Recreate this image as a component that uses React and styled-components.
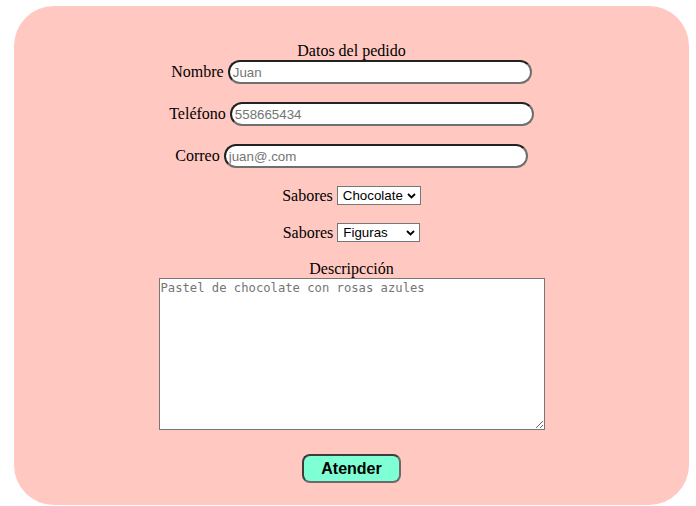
import React from "react";
import styled, { createGlobalStyle } from "styled-components";

const GlobalStyle = createGlobalStyle`
  html, body {
    margin: 0;
    padding: 0;
    background: #ffffff;
  }
  body {
    font-family: "Liberation Serif", "Times New Roman", serif;
    font-size: 16px;
    color: #000;
  }
`;

const Page = styled.div`
  padding: 6px 7px 1px 14px;
`;

const Card = styled.form`
  box-sizing: border-box;
  width: 675px;
  height: 499px;
  background: #ffc8c0;
  border-radius: 40px;
  padding-top: 36px;
  display: flex;
  flex-direction: column;
  align-items: center;
`;

const Heading = styled.div`
  font-family: "Liberation Serif", "Times New Roman", serif;
  font-size: 16px;
  line-height: 18px;
  height: 18px;
  margin-top: ${(p) => p.$mt || 0}px;
`;

const Row = styled.div`
  display: flex;
  align-items: center;
  gap: 4px;
  margin-top: ${(p) => p.$mt || 0}px;
`;

const Label = styled.label`
  font-family: "Liberation Serif", "Times New Roman", serif;
  font-size: 16px;
  line-height: 18px;
`;

const TextInput = styled.input`
  box-sizing: border-box;
  width: 304px;
  height: 24px;
  padding: 1px 3px;
  border-width: 2px;
  border-style: solid;
  border-color: #222 #6f6f6f #6f6f6f #222;
  border-radius: 12px;
  background: #fff;
  font-family: "Liberation Sans", Arial, sans-serif;
  font-size: 13.33px;
  color: #000;
  outline: none;
  &::placeholder {
    color: #757575;
  }
`;

const SelectWrap = styled.span`
  position: relative;
  display: inline-flex;
`;

const Select = styled.select`
  box-sizing: border-box;
  appearance: none;
  -webkit-appearance: none;
  width: ${(p) => p.$w}px;
  height: 19px;
  margin: 0;
  padding: 0 16px 0 5px;
  border: 1px solid #767676;
  border-radius: 0;
  background: #fff;
  font-family: "Liberation Sans", Arial, sans-serif;
  font-size: 13.33px;
  color: #000;
  outline: none;
`;

const Chevron = styled.svg`
  position: absolute;
  right: 5px;
  top: 7px;
  pointer-events: none;
`;

const TextArea = styled.textarea`
  box-sizing: border-box;
  display: block;
  width: 386px;
  height: 152px;
  margin: 0;
  padding: 2px 1px;
  border: 1px solid #767676;
  border-radius: 0;
  background: #fff;
  font-family: "DejaVu Sans Mono", "Liberation Mono", monospace;
  font-size: 12.2px;
  line-height: 15px;
  outline: none;
  &::placeholder {
    color: #757575;
  }
`;

const Button = styled.button`
  box-sizing: border-box;
  width: 99px;
  height: 29px;
  margin-top: 24px;
  border: 2px solid #4a4a4a;
  border-color: #3c3c3c #6a6a6a #6a6a6a #3c3c3c;
  border-radius: 8px;
  background: #7fffd4;
  font-family: "Liberation Sans", Arial, sans-serif;
  font-weight: bold;
  font-size: 16px;
  color: #000;
  padding: 0;
  cursor: pointer;
`;

function Dropdown({ id, width, options }) {
  return (
    <SelectWrap>
      <Select id={id} $w={width} defaultValue={options[0]}>
        {options.map((o) => (
          <option key={o} value={o}>
            {o}
          </option>
        ))}
      </Select>
      <Chevron width="9" height="6" viewBox="0 0 9 6">
        <path d="M1 1 L4.5 4.5 L8 1" fill="none" stroke="#000" strokeWidth="1.8" />
      </Chevron>
    </SelectWrap>
  );
}

export default function App() {
  return (
    <>
      <GlobalStyle />
      <Page>
        <Card onSubmit={(e) => e.preventDefault()}>
          <Heading>Datos del pedido</Heading>
          <Row>
            <Label htmlFor="nombre">Nombre</Label>
            <TextInput id="nombre" type="text" placeholder="Juan" />
          </Row>
          <Row $mt={18}>
            <Label htmlFor="telefono">Teléfono</Label>
            <TextInput id="telefono" type="tel" placeholder="558665434" />
          </Row>
          <Row $mt={18}>
            <Label htmlFor="correo">Correo</Label>
            <TextInput id="correo" type="email" placeholder="juan@.com" />
          </Row>
          <Row $mt={18}>
            <Label htmlFor="sabor">Sabores</Label>
            <Dropdown id="sabor" width={84} options={["Chocolate", "Vainilla", "Fresa"]} />
          </Row>
          <Row $mt={18}>
            <Label htmlFor="forma">Sabores</Label>
            <Dropdown id="forma" width={83} options={["Figuras", "Flores", "Letras"]} />
          </Row>
          <Heading $mt={18}>Descripcción</Heading>
          <TextArea placeholder="Pastel de chocolate con rosas azules" />
          <Button type="submit">Atender</Button>
        </Card>
      </Page>
    </>
  );
}
